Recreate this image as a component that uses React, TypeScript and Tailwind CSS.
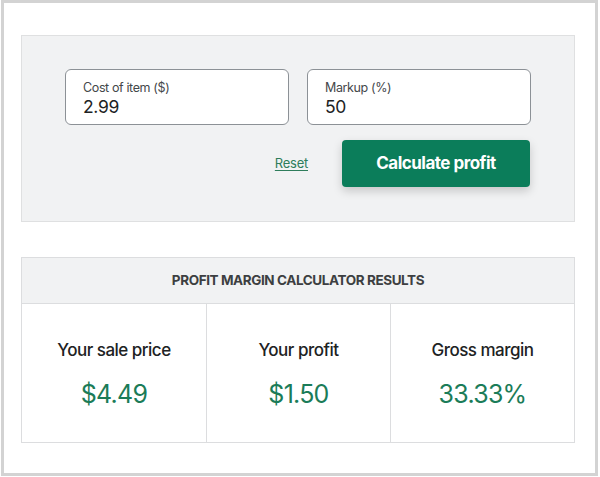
import { useState } from 'react';

const font = { fontFamily: 'Inter, "Noto Sans", sans-serif' };

interface FieldProps {
  label: string;
  value: string;
  onChange: (v: string) => void;
}

function Field({ label, value, onChange }: FieldProps) {
  return (
    <label className="flex h-[56px] w-[224px] flex-col justify-center rounded-[6px] border border-[#8c9196] bg-white pl-[17px] pt-[4px]">
      <span className="text-[12.5px] leading-[16px] tracking-[-0.03em] text-[#44474a]">{label}</span>
      <input
        value={value}
        onChange={(e) => onChange(e.target.value)}
        className="w-full bg-transparent text-[17.5px] leading-[22px] tracking-[-0.02em] text-[#202223] outline-none"
      />
    </label>
  );
}

export default function App() {
  const [cost, setCost] = useState('2.99');
  const [markup, setMarkup] = useState('50');

  const results = [
    { title: 'Your sale price', value: '$4.49' },
    { title: 'Your profit', value: '$1.50' },
    { title: 'Gross margin', value: '33.33%' },
  ];

  return (
    <div className="h-[477px] w-[600px] bg-white pl-px" style={font}>
      <div className="h-[476px] w-[597px] border-[3px] border-[#d3d3d3] pl-[17px] pt-[32px]">
        <div className="h-[187px] w-[554px] border border-[#dfe0e1] bg-[#f1f2f3]">
          <div className="ml-[43px] mt-[33px] flex w-[466px] flex-col">
            <div className="flex justify-between">
              <Field label="Cost of item ($)" value={cost} onChange={setCost} />
              <Field label="Markup (%)" value={markup} onChange={setMarkup} />
            </div>
            <div className="mt-[15px] flex items-center justify-end gap-[34px] pr-px">
              <button
                onClick={() => {
                  setCost('');
                  setMarkup('');
                }}
                className="text-[13px] tracking-[-0.02em] text-[#2e7d5b] underline underline-offset-2"
              >
                Reset
              </button>
              <button className="h-[47px] w-[188px] rounded-[4px] bg-[#0b7d5a] text-[17px] font-bold tracking-[-0.03em] text-white shadow-[0_4px_10px_rgba(0,0,0,0.18)]">
                Calculate profit
              </button>
            </div>
          </div>
        </div>

        <div className="mt-[35px] w-[554px] border border-[#dcdddf]">
          <div className="flex h-[46px] items-center justify-center border-b border-[#dcdddf] bg-[#f1f2f3] text-[13.5px] font-bold tracking-[-0.03em] text-[#3d3f41]">
            PROFIT MARGIN CALCULATOR RESULTS
          </div>
          <div className="grid h-[138px] grid-cols-3 bg-white">
            {results.map((r, i) => (
              <div
                key={r.title}
                className={`flex flex-col items-center pt-[35px] ${i > 0 ? 'border-l border-[#dcdddf]' : ''}`}
              >
                <span className="text-[17px] font-medium leading-[22px] tracking-[-0.03em] text-[#202223]">{r.title}</span>
                <span className="mt-[17px] text-[25px] leading-[32px] tracking-[-0.03em] text-[#1b7c58]">{r.value}</span>
              </div>
            ))}
          </div>
        </div>
      </div>
    </div>
  );
}
